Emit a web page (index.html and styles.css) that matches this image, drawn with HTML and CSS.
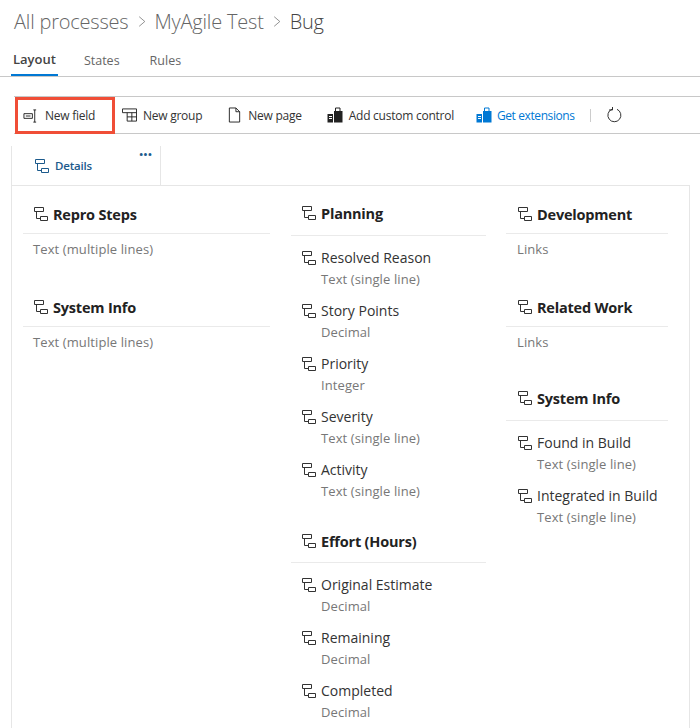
FILE: index.html
```html
<!DOCTYPE html>
<html lang="en">
<head>
    <meta charset="UTF-8">
    <title>Bug - MyAgile Test</title>
    <link rel="stylesheet" href="styles.css">
</head>
<body>
    <svg class="defs" width="0" height="0">
        <symbol id="grp" viewBox="0 0 16 16">
            <path d="M1.5 1.5h9v4h-9zM3.5 5.5v7h4M7.5 10.5h7v4h-7z" fill="none" stroke="currentColor"/>
        </symbol>
    </svg>

    <header class="crumbs">
        <span>All processes</span>
        <svg class="chev" viewBox="0 0 10 16"><path d="M1.5 2l7 6-7 6" fill="none" stroke="currentColor"/></svg>
        <span>MyAgile Test</span>
        <svg class="chev" viewBox="0 0 10 16"><path d="M1.5 2l7 6-7 6" fill="none" stroke="currentColor"/></svg>
        <span class="last">Bug</span>
    </header>

    <nav class="tabs">
        <a class="tab active">Layout</a>
        <a class="tab">States</a>
        <a class="tab">Rules</a>
    </nav>

    <div class="toolbar">
        <div class="tool boxed">
            <svg class="ico" viewBox="0 0 16 16"><path d="M1 5.500h9v5H1zM3 8h5" fill="none" stroke="currentColor"/><path d="M11 1.500h3M11 14.500h3M12.500 1.500v13" fill="none" stroke="currentColor"/></svg>
            New field
        </div>
        <div class="tool">
            <svg class="ico" viewBox="0 0 16 16"><path d="M.5 1.500h15v13h-10v-9M.5 1.500v4h15M5.500 10h10M10.500 5.500v9" fill="none" stroke="currentColor"/></svg>
            New group
        </div>
        <div class="tool">
            <svg class="ico" viewBox="0 0 16 16"><path d="M2.500.5h7l4 4v11h-11zM9.500.5v4h4" fill="none" stroke="currentColor"/></svg>
            New page
        </div>
        <div class="tool">
            <svg class="ico big" viewBox="0 0 16 16"><path d="M7 4h8.500v11.500H7zM.5 7H6v8.500H.5z" fill="currentColor"/><path d="M8.500 4V1h4.500v3" fill="none" stroke="currentColor"/><path d="M2 9.500h3M2 11.500h3" stroke="#fff"/></svg>
            Add custom control
        </div>
        <div class="tool link">
            <svg class="ico big" viewBox="0 0 16 16"><path d="M7 4h8.500v11.500H7zM.5 7H6v8.500H.5z" fill="currentColor"/><path d="M8.500 4V1h4.500v3" fill="none" stroke="currentColor"/><path d="M2 9.500h3M2 11.500h3" stroke="#fff"/></svg>
            Get extensions
        </div>
        <span class="sep"></span>
        <svg class="refresh" viewBox="0 0 16 16"><path d="M5 2.200a6.500 6.500 0 1 0 5 .1M5.500 0v3H2" fill="none" stroke="currentColor"/></svg>
    </div>

    <div class="pagetabs">
        <div class="pagetab">
            <svg class="grp"><use href="#grp"/></svg>
            Details
            <span class="dots">&bull;&bull;&bull;</span>
        </div>
    </div>

    <main class="card">
        <section class="col col-a">
            <div class="group">
                <h3><svg class="grp"><use href="#grp"/></svg>Repro Steps</h3>
                <p class="plain">Text (multiple lines)</p>
            </div>
            <div class="group">
                <h3><svg class="grp"><use href="#grp"/></svg>System Info</h3>
                <p class="plain">Text (multiple lines)</p>
            </div>
        </section>

        <section class="col col-b">
            <div class="group">
                <h3 class="tall"><svg class="grp"><use href="#grp"/></svg>Planning</h3>
                <div class="field"><svg class="grp"><use href="#grp"/></svg><b>Resolved Reason</b><i>Text (single line)</i></div>
                <div class="field"><svg class="grp"><use href="#grp"/></svg><b>Story Points</b><i>Decimal</i></div>
                <div class="field"><svg class="grp"><use href="#grp"/></svg><b>Priority</b><i>Integer</i></div>
                <div class="field"><svg class="grp"><use href="#grp"/></svg><b>Severity</b><i>Text (single line)</i></div>
                <div class="field"><svg class="grp"><use href="#grp"/></svg><b>Activity</b><i>Text (single line)</i></div>
            </div>
            <div class="group effort">
                <h3 class="tall"><svg class="grp"><use href="#grp"/></svg>Effort (Hours)</h3>
                <div class="field"><svg class="grp"><use href="#grp"/></svg><b>Original Estimate</b><i>Decimal</i></div>
                <div class="field"><svg class="grp"><use href="#grp"/></svg><b>Remaining</b><i>Decimal</i></div>
                <div class="field"><svg class="grp"><use href="#grp"/></svg><b>Completed</b><i>Decimal</i></div>
            </div>
        </section>

        <section class="col col-c">
            <div class="group">
                <h3><svg class="grp"><use href="#grp"/></svg>Development</h3>
                <p class="plain">Links</p>
            </div>
            <div class="group">
                <h3><svg class="grp"><use href="#grp"/></svg>Related Work</h3>
                <p class="plain">Links</p>
            </div>
            <div class="group">
                <h3 class="tall"><svg class="grp"><use href="#grp"/></svg>System Info</h3>
                <div class="field"><svg class="grp"><use href="#grp"/></svg><b>Found in Build</b><i>Text (single line)</i></div>
                <div class="field"><svg class="grp"><use href="#grp"/></svg><b>Integrated in Build</b><i>Text (single line)</i></div>
            </div>
        </section>
    </main>
</body>
</html>
```

FILE: styles.css
```css
html, body {
    height: 728px;
    overflow: hidden;
}
body {
    margin: 0;
    background: #fff;
    color: #333;
    font-family: "Open Sans", "Noto Sans", sans-serif;
    font-size: 13px;
}
.defs {
    display: block;
    height: 0;
}

/* breadcrumb */
.crumbs {
    display: flex;
    align-items: center;
    gap: 9px;
    height: 28px;
    padding: 7px 0 1px 14px;
    font-size: 20px;
    font-weight: 300;
    letter-spacing: -0.2px;
    color: #666;
}
.crumbs .last {
    color: #444;
}
.chev {
    width: 8px;
    height: 13px;
    color: #777;
}

/* tabs */
.tabs {
    display: flex;
    height: 40px;
    border-bottom: 1px solid #c8c8c8;
}
.tab {
    display: flex;
    align-items: center;
    padding: 8px 2px 0;
    margin-left: 11px;
    margin-right: 13px;
    color: #666;
    font-size: 12.5px;
}
.tab.active {
    color: #444;
    font-weight: 600;
    font-size: 13px;
    border-bottom: 2px solid #0078d4;
    height: 30px;
    padding-top: 8px;
    margin-right: 13px;
}
.tab.active + .tab + .tab {
    margin-left: 13px;
}

/* toolbar */
.toolbar {
    display: flex;
    align-items: center;
    height: 36px;
    margin-top: 19px;
    margin-left: 14px;
    border-top: 1px solid #c8c8c8;
    border-bottom: 1px solid #c8c8c8;
    font-size: 12px;
    letter-spacing: -0.25px;
    color: #333;
}
.tool {
    display: flex;
    align-items: center;
    gap: 6px;
    white-space: nowrap;
    margin-right: 25px;
}
.tool.boxed {
    box-sizing: border-box;
    height: 37px;
    width: 100px;
    margin: 1px 7px 0 1px;
    padding-left: 5px;
    gap: 7px;
    border: 3px solid #f04e37;
}
.tool.link {
    color: #0078d4;
    margin-left: -3px;
    margin-right: 15px;
    gap: 5px;
    letter-spacing: -0.4px;
}
.ico {
    width: 15px;
    height: 16px;
    color: #222;
}
.ico.big {
    width: 16px;
}
.link .ico {
    color: #0078d4;
}
.sep {
    width: 1px;
    height: 13px;
    background: #ccc;
    margin-right: 16px;
}
.refresh {
    width: 16px;
    height: 16px;
    color: #333;
}

/* page tab strip */
.pagetabs {
    height: 39px;
    margin: 12px 0 0 11px;
    display: flex;
}
.pagetab {
    box-sizing: border-box;
    width: 150px;
    height: 39px;
    padding: 12px 0 0 22px;
    border-left: 1px solid #e6e6e6;
    border-right: 1px solid #e6e6e6;
    color: #1c5a8c;
    font-weight: 600;
    font-size: 11.5px;
    letter-spacing: -0.2px;
    position: relative;
    display: flex;
    align-items: flex-start;
}
.pagetab .grp {
    margin-right: 5px;
    color: #1c5a8c;
}
.dots {
    position: absolute;
    top: 1px;
    right: 8px;
    font-size: 11.5px;
    letter-spacing: 0;
    color: #1c5a8c;
}

/* card + columns */
.card {
    display: flex;
    height: 560px;
    margin: 0 10px 0 11px;
    border: 1px solid #e6e6e6;
    border-bottom: 0;
    padding-top: 14px;
}
.col-a {
    width: 247px;
    margin-left: 11px;
}
.col-b {
    width: 195px;
    margin-left: 21px;
    margin-top: -1px;
}
.col-c {
    width: 162px;
    margin-left: 20px;
}
.grp {
    width: 16px;
    height: 16px;
    flex: none;
    color: #333;
}

h3 {
    display: flex;
    align-items: flex-start;
    gap: 4px;
    height: 34px;
    margin: 0;
    padding: 5px 0 0 10px;
    line-height: 20px;
    border-bottom: 1px solid #eaeaea;
    box-sizing: border-box;
    font-size: 14.5px;
    font-weight: 700;
    letter-spacing: -0.2px;
    color: #222;
}
h3 .grp {
    margin-top: 1px;
}
h3.tall {
    height: 37px;
}
.effort h3.tall {
    height: 36px;
}
.plain {
    margin: 6px 0 0 10px;
    height: 18px;
    line-height: 18px;
    font-size: 13px;
    letter-spacing: 0.1px;
    color: #777;
}
.group {
    margin-bottom: 35px;
}
.col-b .group {
    margin-bottom: 15px;
}
.col-c .group:nth-child(2) {
    margin-bottom: 33px;
}
.col-c h3, .col-c .field {
    padding-left: 11px;
}
.col-c .plain {
    margin-left: 11px;
}

.field {
    display: grid;
    grid-template-columns: 16px 1fr;
    grid-template-rows: 20px 22px;
    align-content: start;
    column-gap: 4px;
    height: 53px;
    padding: 1px 0 0 10px;
    box-sizing: border-box;
}
.group h3 + .field {
    margin-top: 11px;
}
.field .grp {
    margin-top: 2px;
}
.field b {
    font-weight: 400;
    font-size: 14px;
    line-height: 20px;
    color: #333;
    white-space: nowrap;
}
.field i {
    grid-column: 2;
    font-style: normal;
    font-size: 13px;
    letter-spacing: 0.1px;
    line-height: 22px;
    color: #777;
    white-space: nowrap;
}
```
